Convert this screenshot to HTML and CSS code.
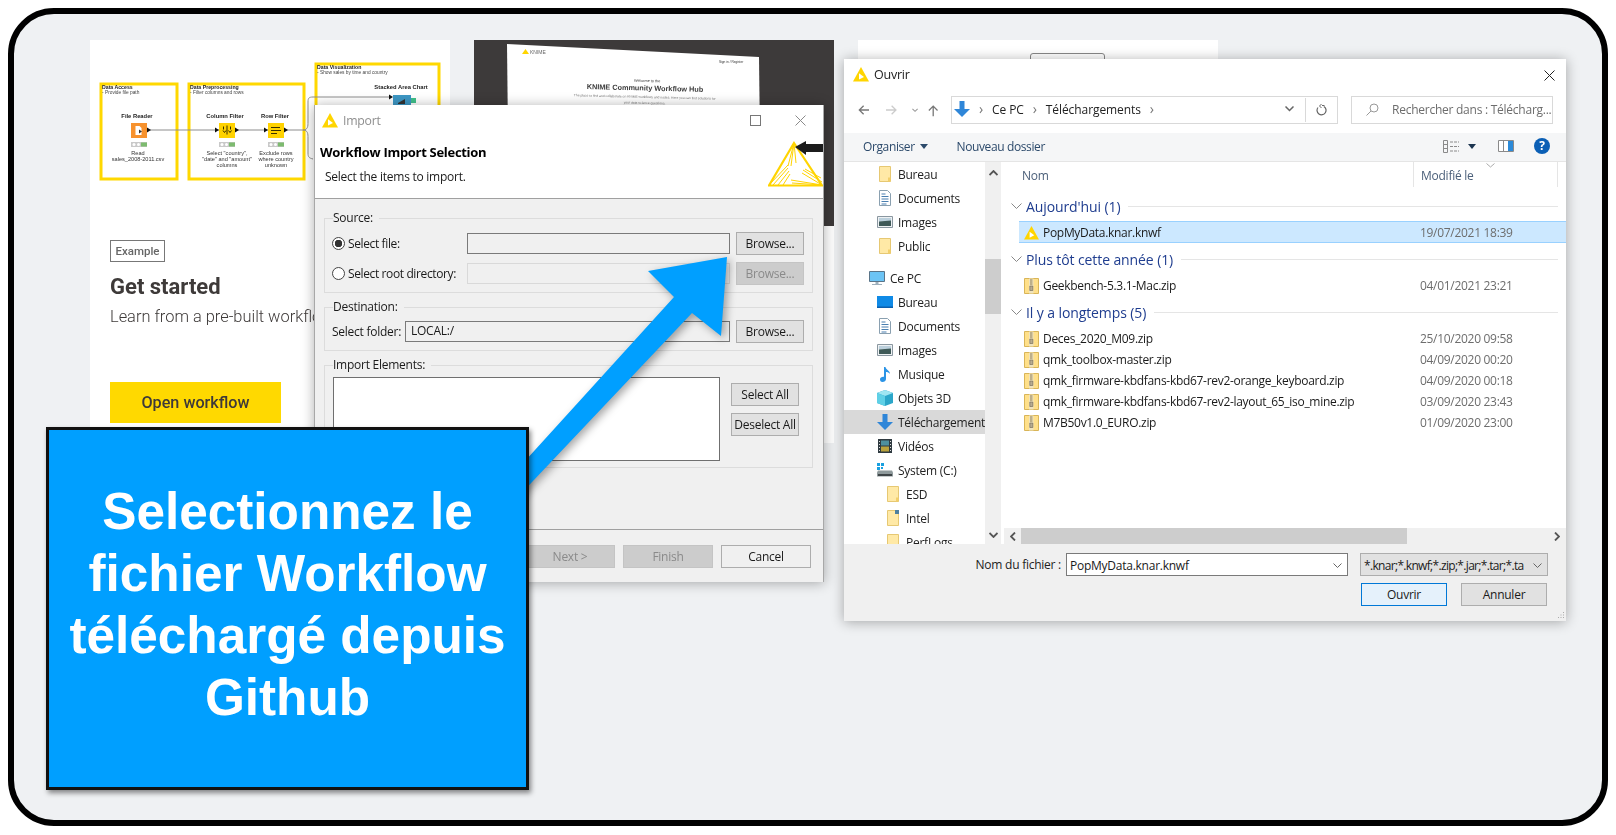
FILE: index.html
```html
<!DOCTYPE html>
<html lang="fr">
<head>
<meta charset="utf-8">
<title>Import workflow</title>
<link rel="stylesheet" href="styles.css">
</head>
<body>
<svg class="defs" aria-hidden="true">
  <symbol id="knime" viewBox="0 0 16 15"><path d="M8 0 16 14.500H0Z" fill="#ffd500"/><path d="M6 6.200 11 10 6 12.600Z" fill="#fff"/></symbol>
  <symbol id="folder" viewBox="0 0 16 16"><path d="M2.500.500h11v15h-11z" fill="#ffe9a6" stroke="#e6c873"/><path d="M11 11.500h2.500v4H11z" fill="#f2cf6b"/></symbol>
  <symbol id="folder-i" viewBox="0 0 16 16"><path d="M2.500.500h11v15h-11z" fill="#ffe9a6" stroke="#e6c873"/><path d="M10 0h4v4h-4z" fill="#4d7f9e"/></symbol>
  <symbol id="doc" viewBox="0 0 16 16"><path d="M2.500.500h8l3 3v12h-11z" fill="#fff" stroke="#8aa0b0"/><path d="M4.500 4h4M4.500 6.500h7M4.500 9h7M4.500 11.500h7M4.500 14h5" stroke="#4a7fb0"/></symbol>
  <symbol id="images" viewBox="0 0 16 16"><path d="M.5 2.500h15v11H.500z" fill="#eef1f3" stroke="#8a97a0"/><path d="M2 4h12v3.500H2z" fill="#bcd0dc"/><path d="M2 7.500 14 6.500v5.500H2z" fill="#3f5a58"/></symbol>
  <symbol id="desktop" viewBox="0 0 16 16"><path d="M0 2h16v11.500H0z" fill="#0f8ae6"/><path d="M0 12.500h16V14H0z" fill="#0a5fae"/></symbol>
  <symbol id="pc" viewBox="0 0 16 16"><path d="M.5 1.500h15v10H.500z" fill="#6cc4f5" stroke="#5a7488"/><path d="M6.500 12h3v2h-3zM3 14h10v1H3z" fill="#9fb0bc"/></symbol>
  <symbol id="music" viewBox="0 0 16 16"><path d="M7 1h1.500c.3 3 4.500 3.500 4.500 7-1-1.500-2.600-2-4-2v7c0 1.800-1.700 3-3.500 3S3 14.900 3 13.300 4.900 10.500 7 10.800Z" fill="#2b94e6"/></symbol>
  <symbol id="cube" viewBox="0 0 16 16"><path d="M8 0 16 3v10l-8 3-8-3V3Z" fill="#2ba6c9"/><path d="M8 0 16 3 8 6 0 3Z" fill="#9fe6f2"/><path d="M0 3 8 6v10l-8-3Z" fill="#5fd0e6"/></symbol>
  <symbol id="down" viewBox="0 0 16 16"><path d="M5.500 0h5v8H16l-8 8-8-8h5.500z" fill="#2f86d8"/></symbol>
  <symbol id="video" viewBox="0 0 16 16"><path d="M1 1h14v14H1z" fill="#2f3a40"/><path d="M4 2.500h8v5H4z" fill="#4d8f9e"/><path d="M4 8.500h8v5H4z" fill="#b9a23c"/><path d="M2 3h1v1H2zM2 6h1v1H2zM2 9h1v1H2zM2 12h1v1H2zM13 3h1v1h-1zM13 6h1v1h-1zM13 9h1v1h-1zM13 12h1v1h-1z" fill="#ddd"/></symbol>
  <symbol id="drive" viewBox="0 0 16 16"><path d="M1 8.500h14l1 2v4H0v-4z" fill="#8f9a9c"/><path d="M1 12h14v2H1z" fill="#3f4548"/><path d="M0 1h3v3H0zM4 1h3v3H4zM0 5h3v3H0zM4 5h2v2H4z" fill="#19a0e0"/></symbol>
  <symbol id="zip" viewBox="0 0 15 16"><path d="M.5.500h14v15H.500z" fill="#ffe08a" stroke="#d9b558"/><path d="M5 .500h4.500v15H5z" fill="#efe3bd"/><path d="M6 2h2.500M6 4h2.500M6 6h2.500" stroke="#8a7b58"/><path d="M5.800 8h3v4.500h-3z" fill="#b7ab90" stroke="#6d6350" stroke-width=".6"/></symbol>
</svg>

<main class="frame">

  <section class="card card-one">
    <svg class="diagram" viewBox="90 40 360 200" width="360" height="200" role="img" aria-label="Workflow">
      <g class="yellow-box">
        <rect x="101" y="84" width="76" height="95"/>
        <rect x="189" y="84" width="115" height="95"/>
        <rect x="316" y="64" width="123" height="80"/>
      </g>
      <path class="wire" d="M150 130H303c5 0 5-4 5-8V102c0-4 1-5 5-5H392M303 130c5 0 5 4 5 8v15c0 4 1 5 5 6"/>
      <g class="dia-head">
        <text x="102" y="88.500">Data Access</text>
        <text x="190" y="88.500">Data Preprocessing</text>
        <text x="317" y="69">Data Visualization</text>
      </g>
      <g class="dia-sub">
        <text x="102" y="93.500">- Provide file path</text>
        <text x="190" y="93.500">- Filter columns and rows</text>
        <text x="317" y="74">- Show sales by time and country</text>
      </g>
      <g class="dia-label">
        <text x="137" y="118">File Reader</text>
        <text x="225" y="118">Column Filter</text>
        <text x="275" y="118">Row Filter</text>
        <text x="401" y="89">Stacked Area Chart</text>
      </g>
      <rect x="131" y="123" width="16" height="15" fill="#f7922e"/>
      <path d="M135.500 126h4l2 2v7h-6z" fill="#fff"/><path d="M139 129.500v4l3-2z" fill="#333"/>
      <rect x="219" y="123" width="16" height="15" fill="#ffd200"/>
      <path d="M223.500 126.500v3M227 125.500v9M230.500 126.500v3M223 130.500l1.500 2 1.500-2M228.500 130.500l1.500 2 1.500-2" stroke="#3a3000" fill="none"/>
      <rect x="268" y="123" width="16" height="15" fill="#ffd200"/>
      <path d="M271 127.500h9M271 130.500h10M271 133.500h6" stroke="#3a3000"/>
      <rect x="393" y="95" width="18" height="12" fill="#3d97c4"/>
      <path d="M398 103l7-4v5h-7z" fill="#333"/>
      <rect x="411" y="98" width="5" height="5" fill="#3fc08a"/>
      <g fill="#111">
        <path d="M147 127.500v5l4-2.500z"/><path d="M215 127.500v5l4-2.500z"/><path d="M235 127.500v5l4-2.500z"/>
        <path d="M264 127.500v5l4-2.500z"/><path d="M284 127.500v5l4-2.500z"/><path d="M389 94.500v5l4-2.500z"/>
      </g>
      <g class="lights">
        <rect x="131" y="142" width="16" height="5"/><rect x="219" y="142" width="16" height="5"/><rect x="268" y="142" width="16" height="5"/>
      </g>
      <g fill="#fff"><circle cx="134" cy="144.500" r="1.500"/><circle cx="138.500" cy="144.500" r="1.500"/><circle cx="222" cy="144.500" r="1.500"/><circle cx="226.500" cy="144.500" r="1.500"/><circle cx="271" cy="144.500" r="1.500"/><circle cx="275.500" cy="144.500" r="1.500"/></g>
      <g fill="#7dbb6f"><rect x="141" y="142.500" width="6" height="4"/><rect x="229" y="142.500" width="6" height="4"/><rect x="278" y="142.500" width="6" height="4"/></g>
      <g class="dia-note">
        <text x="138" y="155">Read</text>
        <text x="138" y="161">sales_2008-2011.csv</text>
        <text x="227" y="155">Select "country",</text>
        <text x="227" y="161">"date" and "amount"</text>
        <text x="227" y="167">columns</text>
        <text x="276" y="155">Exclude rows</text>
        <text x="276" y="161">where country</text>
        <text x="276" y="167">unknown</text>
      </g>
    </svg>
    <div class="card-body">
      <span class="tag">Example</span>
      <h2 class="card-title">Get started</h2>
      <p class="card-text">Learn from a pre-built workflow</p>
      <a class="cta">Open workflow</a>
    </div>
  </section>

  <section class="card card-two">
    <div class="hub">
      <svg viewBox="474 40 360 186" width="360" height="186" role="img" aria-label="KNIME Hub">
        <path d="M507 44 759 57 761 226H509Z" fill="#fff"/>
        <path d="M522 54 525.500 49 529 54Z" fill="#ffd500"/>
        <text x="530" y="54" class="hub-logo">KNIME</text>
        <text x="719" y="63" class="hub-nav">Sign in / Register</text>
        <g transform="rotate(1.400 645 88)">
          <text x="647" y="82" class="hub-small">Welcome to the</text>
          <text x="645" y="90.500" class="hub-title">KNIME Community Workflow Hub</text>
          <text x="645" y="98" class="hub-tiny">The place to find and collaborate on KNIME workflows and nodes. Here you can find solutions for</text>
          <text x="645" y="104" class="hub-tiny">your data science questions.</text>
        </g>
      </svg>
    </div>
  </section>

  <section class="card card-three"><div class="ghost-box"></div></section>

  <section class="window import">
    <header class="import-head">
      <div class="titlebar">
        <svg class="title-icon" width="16" height="15"><use href="#knime"/></svg>
        <span class="title-muted">Import</span>
        <span class="max-btn"></span>
        <svg class="close-btn" width="11" height="11" viewBox="0 0 11 11"><path d="M.5.500l10 10M10.500.500l-10 10" stroke="#8a8a8a"/></svg>
      </div>
      <h1 class="import-title">Workflow Import Selection</h1>
      <p class="import-sub">Select the items to import.</p>
      <svg class="import-logo" viewBox="0 0 55 47" width="55" height="47">
        <g fill="none" stroke="#ffd400">
          <path d="M26 3 54 45.500H1Z" stroke-width="2.200"/>
          <path d="M26 3 20 26M26 3 23 26M26 3 28 23M1 45 20 25M5 45 20 28M10 45 21 31M15 45 22 34M54 45 34 33M54 42 35 30M53 38 37 29M54 45 23 40M54 45 24 43" stroke-width="1"/>
        </g>
        <path d="M27 7 38 1V4H55V12H38v3Z" fill="#1c1c1c"/>
      </svg>
    </header>
    <div class="import-body">
      <div class="group">
        <span class="legend">Source:</span>
        <div class="form-grid source-grid">
          <label class="radio-line"><span class="radio on"></span>Select file:</label>
          <span class="field"></span>
          <button class="btn">Browse...</button>
          <label class="radio-line"><span class="radio"></span>Select root directory:</label>
          <span class="field field-off"></span>
          <button class="btn btn-off">Browse...</button>
        </div>
      </div>
      <div class="group group-dest">
        <span class="legend">Destination:</span>
        <div class="form-grid dest-grid">
          <label class="folder-label">Select folder:</label>
          <span class="field">LOCAL:/</span>
          <button class="btn">Browse...</button>
        </div>
      </div>
      <div class="group">
        <span class="legend">Import Elements:</span>
        <div class="elements">
          <div class="listbox"></div>
          <div class="side-btns">
            <button class="btn">Select All</button>
            <button class="btn">Deselect All</button>
          </div>
        </div>
      </div>
    </div>
    <footer class="import-foot">
      <button class="btn btn-wide btn-off">Next &gt;</button>
      <button class="btn btn-wide btn-off">Finish</button>
      <button class="btn btn-wide btn-cancel">Cancel</button>
    </footer>
  </section>

  <svg class="arrow-layer" viewBox="14 14 1588 806" width="1588" height="806" aria-hidden="true">
    <path d="M727 257 648 271 674 297 515 472V500L692 313 721 336Z" fill="#009fff"/>
  </svg>

  <section class="window ouvrir">
    <div class="o-title">
      <svg class="o-icon" width="16" height="15"><use href="#knime"/></svg>
      <span>Ouvrir</span>
      <svg class="o-close" width="11" height="11" viewBox="0 0 11 11"><path d="M.5.500l10 10M10.500.500l-10 10" stroke="#222"/></svg>
    </div>
    <div class="o-address">
      <div class="nav-btns">
        <svg width="13" height="12" viewBox="0 0 13 12"><path d="M13 6H1.500M6.500 1 1.500 6l5 5" fill="none" stroke="#777" stroke-width="1.500"/></svg>
        <svg width="13" height="12" viewBox="0 0 13 12"><path d="M0 6h11.500M6.500 1l5 5-5 5" fill="none" stroke="#ccc" stroke-width="1.500"/></svg>
        <svg width="7" height="5" viewBox="0 0 7 5"><path d="M.5.500 3.500 3.500 6.500.500" fill="none" stroke="#999" stroke-width="1.200"/></svg>
        <svg width="12" height="13" viewBox="0 0 12 13"><path d="M6 13V1.500M1 6.500l5-5 5 5" fill="none" stroke="#777" stroke-width="1.500"/></svg>
      </div>
      <div class="crumbs">
        <svg class="crumb-icon" width="16" height="16"><use href="#down"/></svg>
        <span class="sep">›</span><span>Ce PC</span>
        <span class="sep">›</span><span>Téléchargements</span>
        <span class="sep">›</span>
        <svg class="crumb-drop" width="9" height="6" viewBox="0 0 9 6"><path d="M.5.500 4.500 4.500 8.500.500" fill="none" stroke="#666" stroke-width="1.500"/></svg>
        <span class="refresh">
          <svg width="11" height="12" viewBox="0 0 11 12"><path d="M5 1.500h2.500M4.500 0l-2 2 2 2" fill="none" stroke="#666" transform="translate(1 0)"/><path d="M7.800 2.400A4.500 4.500 0 1 1 2 3.500" fill="none" stroke="#666" stroke-width="1.200"/></svg>
        </span>
      </div>
      <div class="search">
        <svg width="13" height="13" viewBox="0 0 13 13"><circle cx="8" cy="5" r="4" fill="none" stroke="#999"/><path d="M5 8 .5 12.500" stroke="#999"/></svg>
        <span>Rechercher dans : Télécharg...</span>
      </div>
    </div>
    <div class="o-toolbar">
      <span class="tool">Organiser <i class="caret"></i></span>
      <span class="tool tool-new">Nouveau dossier</span>
      <span class="tool-right">
        <svg width="16" height="13" viewBox="0 0 16 13"><path d="M.5.500h4v12h-4zM.5 4.500h4M.5 8.500h4" fill="none" stroke="#8a8a8a"/><path d="M7 2h9M7 6.500h9M7 11h9" stroke="#8a8a8a" stroke-dasharray="3 1"/></svg>
        <i class="caret caret-view"></i>
        <svg class="pane-icon" width="16" height="12" viewBox="0 0 16 12"><path d="M.5.500h15v11H.500z" fill="#fff" stroke="#8a8a8a"/><path d="M10 1h5v10h-5z" fill="#2c8ad8"/><path d="M5.500 1v10" stroke="#8a8a8a"/></svg>
        <span class="help">?</span>
      </span>
    </div>
    <div class="o-main">
      <nav class="sidebar">
        <div class="nav-item lv1"><svg width="16" height="16"><use href="#folder"/></svg>Bureau</div>
        <div class="nav-item lv1"><svg width="16" height="16"><use href="#doc"/></svg>Documents</div>
        <div class="nav-item lv1"><svg width="16" height="16"><use href="#images"/></svg>Images</div>
        <div class="nav-item lv1"><svg width="16" height="16"><use href="#folder"/></svg>Public</div>
        <div class="nav-item lv0 nav-gap"><svg width="16" height="16"><use href="#pc"/></svg>Ce PC</div>
        <div class="nav-item lv1"><svg width="16" height="16"><use href="#desktop"/></svg>Bureau</div>
        <div class="nav-item lv1"><svg width="16" height="16"><use href="#doc"/></svg>Documents</div>
        <div class="nav-item lv1"><svg width="16" height="16"><use href="#images"/></svg>Images</div>
        <div class="nav-item lv1"><svg width="16" height="16"><use href="#music"/></svg>Musique</div>
        <div class="nav-item lv1"><svg width="16" height="16"><use href="#cube"/></svg>Objets 3D</div>
        <div class="nav-item lv1 nav-on"><svg width="16" height="16"><use href="#down"/></svg>Téléchargements</div>
        <div class="nav-item lv1"><svg width="16" height="16"><use href="#video"/></svg>Vidéos</div>
        <div class="nav-item lv1"><svg width="16" height="16"><use href="#drive"/></svg>System (C:)</div>
        <div class="nav-item lv2"><svg width="16" height="16"><use href="#folder"/></svg>ESD</div>
        <div class="nav-item lv2"><svg width="16" height="16"><use href="#folder-i"/></svg>Intel</div>
        <div class="nav-item lv2"><svg width="16" height="16"><use href="#folder"/></svg>PerfLogs</div>
      </nav>
      <div class="vscroll">
        <svg width="9" height="6" viewBox="0 0 9 6"><path d="M.5 5 4.500 1l4 4" fill="none" stroke="#555" stroke-width="1.800"/></svg>
        <div class="vthumb"></div>
        <svg width="9" height="6" viewBox="0 0 9 6"><path d="M.5 1l4 4 4-4" fill="none" stroke="#555" stroke-width="1.800"/></svg>
      </div>
      <div class="files">
        <div class="columns">
          <span class="col col-name">Nom</span>
          <span class="col col-date">Modifié le
            <svg class="sort" width="9" height="5" viewBox="0 0 9 5"><path d="M.5.500 4.500 4l4-3.500" fill="none" stroke="#aaa"/></svg>
          </span>
          <span class="col"></span>
        </div>
        <div class="list">
          <div class="gh"><svg width="11" height="6" viewBox="0 0 11 6"><path d="M.5.500l5 5 5-5" fill="none" stroke="#888"/></svg><b>Aujourd'hui (1)</b><i></i></div>
          <div class="row row-on"><svg width="15" height="14"><use href="#knime"/></svg><span>PopMyData.knar.knwf</span><time>19/07/2021 18:39</time></div>
          <div class="gh"><svg width="11" height="6" viewBox="0 0 11 6"><path d="M.5.500l5 5 5-5" fill="none" stroke="#888"/></svg><b>Plus tôt cette année (1)</b><i></i></div>
          <div class="row"><svg width="15" height="16"><use href="#zip"/></svg><span>Geekbench-5.3.1-Mac.zip</span><time>04/01/2021 23:21</time></div>
          <div class="gh"><svg width="11" height="6" viewBox="0 0 11 6"><path d="M.5.500l5 5 5-5" fill="none" stroke="#888"/></svg><b>Il y a longtemps (5)</b><i></i></div>
          <div class="row"><svg width="15" height="16"><use href="#zip"/></svg><span>Deces_2020_M09.zip</span><time>25/10/2020 09:58</time></div>
          <div class="row"><svg width="15" height="16"><use href="#zip"/></svg><span>qmk_toolbox-master.zip</span><time>04/09/2020 00:20</time></div>
          <div class="row"><svg width="15" height="16"><use href="#zip"/></svg><span>qmk_firmware-kbdfans-kbd67-rev2-orange_keyboard.zip</span><time>04/09/2020 00:18</time></div>
          <div class="row"><svg width="15" height="16"><use href="#zip"/></svg><span>qmk_firmware-kbdfans-kbd67-rev2-layout_65_iso_mine.zip</span><time>03/09/2020 23:43</time></div>
          <div class="row"><svg width="15" height="16"><use href="#zip"/></svg><span>M7B50v1.0_EURO.zip</span><time>01/09/2020 23:00</time></div>
        </div>
        <div class="hscroll">
          <svg width="6" height="9" viewBox="0 0 6 9"><path d="M5 .500l-4 4 4 4" fill="none" stroke="#555" stroke-width="1.800"/></svg>
          <div class="hthumb"></div>
          <svg width="6" height="9" viewBox="0 0 6 9"><path d="M1 .500l4 4-4 4" fill="none" stroke="#555" stroke-width="1.800"/></svg>
        </div>
      </div>
    </div>
    <div class="o-bottom">
      <div class="o-line">
        <label class="name-label">Nom du fichier :</label>
        <div class="combo">PopMyData.knar.knwf
          <svg width="9" height="5" viewBox="0 0 9 5"><path d="M.5.500l4 4 4-4" fill="none" stroke="#666"/></svg>
        </div>
        <div class="filter"><span>*.knar;*.knwf;*.zip;*.jar;*.tar;*.ta</span>
          <svg width="9" height="5" viewBox="0 0 9 5"><path d="M.5.500l4 4 4-4" fill="none" stroke="#666"/></svg>
        </div>
      </div>
      <div class="o-line o-actions">
        <button class="btn btn-o btn-primary">Ouvrir</button>
        <button class="btn btn-o">Annuler</button>
      </div>
      <svg class="grip" width="9" height="9" viewBox="0 0 9 9"><path d="M7 1h1v1H7zM4.500 3.500h1v1h-1zM7 3.500h1v1H7zM2 6h1v1H2zM4.500 6h1v1h-1zM7 6h1v1H7z" fill="#aaa"/></svg>
    </div>
  </section>

  <aside class="callout">Selectionnez le<br>fichier Workflow<br>téléchargé depuis<br>Github</aside>
</main>
</body>
</html>
```
FILE: styles.css
```css
* { box-sizing: border-box; }
html, body { margin: 0; padding: 0; background: #fff; }
body { width: 1616px; height: 835px; overflow: hidden; font-family: "Open Sans", "Noto Sans", sans-serif; }
.defs { display: none; }
button { font: inherit; margin: 0; padding: 0; }
h1, h2, p { margin: 0; }

.frame {
  position: relative;
  width: 1600px;
  height: 818px;
  margin: 8px;
  border: 6px solid #000;
  border-radius: 46px;
  background: #eff1f3;
  overflow: hidden;
}

/* background cards on the slide canvas */
.card { position: absolute; top: 26px; width: 360px; height: 403px; background: #fff; }
.card-one { left: 76px; font-family: Roboto, sans-serif; }
.card-two { left: 460px; }
.card-three { left: 844px; }
.diagram { display: block; filter: blur(.25px); }
.yellow-box rect { fill: none; stroke: #ffd800; stroke-width: 3; }
.wire { fill: none; stroke: #8d8d8d; stroke-width: 1; }
.diagram text { font-family: "Liberation Sans", sans-serif; fill: #222; }
.dia-head text { font-size: 5.200px; font-weight: 700; }
.dia-sub text { font-size: 4.800px; fill: #444; }
.dia-label text { font-size: 5.800px; font-weight: 700; text-anchor: middle; }
.dia-note text { font-size: 5.600px; text-anchor: middle; fill: #333; }
.lights rect { fill: #c9c9c9; }
.card-body { display: flex; flex-direction: column; align-items: flex-start; padding-left: 20px; filter: blur(.25px); }
.tag { height: 22px; width: 55px; border: 1px solid #777; color: #666; font-size: 11.500px; font-weight: 500; line-height: 21px; text-align: center; }
.card-title { margin-top: 12px; font-size: 22px; line-height: 26px; font-weight: 700; color: #3e3a39; }
.card-text { margin-top: 7px; font-size: 16.400px; line-height: 20px; font-weight: 300; color: #3e3a39; white-space: nowrap; }
.cta { margin-top: 55px; width: 171px; height: 41px; background: #ffd900; color: #3e3a39; font-size: 16.200px; font-weight: 500; line-height: 41px; text-align: center; }

.hub { background: #3d3a3a; height: 186px; }
.hub svg { display: block; filter: blur(.25px); }
.hub text { font-family: "Liberation Sans", sans-serif; fill: #333; text-anchor: middle; }
.hub text.hub-logo { font-size: 5px; text-anchor: start; fill: #666; }
.hub text.hub-nav { font-size: 3.200px; text-anchor: start; }
.hub-small { font-size: 3.800px; }
.hub text.hub-title { font-size: 7.300px; font-weight: 700; fill: #3b3b3b; }
.hub text.hub-tiny { font-size: 3.300px; fill: #777; }
.ghost-box { width: 75px; height: 30px; margin: 13px 0 0 172px; border: 1px solid #888; border-radius: 3px; }

/* dialog windows */
.window { position: absolute; display: flex; flex-direction: column; background: #f0f0f0; box-shadow: 0 1px 12px rgba(0,0,0,.32); font-size: 12px; color: #1a1a1a; letter-spacing: -.25px; filter: blur(.2px); }

.import { left: 300px; top: 91px; width: 510px; height: 477px; border-left: 1px solid #a8a8a8; border-right: 1px solid #a8a8a8; }
.import-head { position: relative; height: 94px; background: #fff; border-bottom: 1px solid #a0a0a0; flex: none; }
.titlebar { display: flex; align-items: center; height: 32px; padding: 0 0 2px 7px; }
.title-muted { margin-left: 5px; font-size: 12.300px; color: #8f8f8f; }
.max-btn { width: 11px; height: 11px; margin-left: auto; margin-right: 1px; border: 1px solid #777; }
.close-btn { margin: 0 17px 0 33px; }
.import-title { padding-left: 5px; font-size: 13px; line-height: 30px; margin-bottom: 2px; font-weight: 700; color: #000; letter-spacing: -.3px; }
.import-sub { padding-left: 10px; line-height: 16px; }
.import-logo { position: absolute; right: 0; top: 35px; }
.import-body { flex: 1; display: flex; flex-direction: column; gap: 14px; padding: 19px 10px 0 9px; }
.group { border: 1px solid #dcdcdc; padding: 0 8px 6px 7px; }
.group-dest { padding-bottom: 7px; }
.legend { display: block; width: fit-content; height: 16px; margin: -8px 0 0 1px; padding: 0 6px 0 0; background: #f0f0f0; line-height: 14px; }
.form-grid { display: grid; align-items: center; }
.source-grid { grid-template-columns: 135px 263px 68px; grid-template-rows: 23px 23px; row-gap: 7px; padding-top: 5px; margin-bottom: 1px; }
.dest-grid { grid-template-columns: 73px 325px 68px; padding-top: 4px; }
.form-grid .btn { width: 68px; margin-left: 6px; }
.radio-line { display: flex; align-items: center; gap: 3px; white-space: nowrap; letter-spacing: -.38px; }
.radio { width: 13px; height: 13px; border: 1px solid #444; border-radius: 50%; background: #fff; }
.radio.on { background: radial-gradient(circle, #333 0 3.500px, #fff 4px); }
.field { display: block; height: 21px; padding-left: 5px; border: 1px solid #7a7a7a; background: #f0f0f0; line-height: 18px; }
.field-off { border-color: #d9d9d9; }
.btn { height: 23px; border: 1px solid #adadad; background: #e1e1e1; color: #1a1a1a; letter-spacing: -.25px; }
.btn-off { background: #ccc; border-color: #c4c4c4; color: #8a8a8a; }
.elements { display: flex; padding: 3px 0 0 1px; gap: 11px; }
.listbox { width: 387px; height: 84px; background: #fff; border: 1px solid #6f6f6f; }
.side-btns { display: flex; flex-direction: column; gap: 7px; padding-top: 6px; }
.side-btns .btn { width: 68px; }
.import-foot { flex: none; height: 53px; display: flex; justify-content: flex-end; gap: 8px; padding: 15px 12px 0 0; border-top: 1px solid #a0a0a0; }
.btn-wide { width: 90px; }
.btn-cancel { background: #f0f0f0; }

.arrow-layer { position: absolute; left: 0; top: 0; pointer-events: none; filter: drop-shadow(3px 3px 4px rgba(0,0,0,.35)); }

.ouvrir { left: 830px; top: 45px; width: 722px; height: 562px; background: #fff; }
.o-title { flex: none; display: flex; align-items: center; height: 32px; padding: 0 0 2px 9px; margin-bottom: 5px; font-size: 12.500px; }
.o-title span { margin-left: 5px; color: #222; }
.o-close { margin-left: auto; margin-right: 11px; margin-top: 2px; }
.o-address { flex: none; display: flex; height: 28px; gap: 13px; margin-bottom: 9px; padding-right: 13px; }
.nav-btns { width: 94px; display: flex; align-items: center; padding-left: 14px; gap: 17px; }
.nav-btns svg:nth-child(3) { margin-left: -3px; margin-right: -7px; }
.crumbs { width: 387px; display: flex; align-items: center; border: 1px solid #d9d9d9; padding: 0 0 2px 2px; color: #222; letter-spacing: -.08px; }
.sep { width: 22px; text-align: center; color: #777; font-size: 14px; line-height: 14px; }
.crumb-drop { margin-left: auto; margin-right: 11px; }
.refresh { display: flex; align-items: center; justify-content: center; width: 32px; height: 100%; margin-bottom: -2px; border-left: 1px solid #d9d9d9; }
.search { width: 202px; display: flex; align-items: center; gap: 13px; padding: 0 0 2px 14px; border: 1px solid #d9d9d9; color: #6d6d6d; white-space: nowrap; }
.o-toolbar { flex: none; display: flex; align-items: center; height: 29px; padding: 0 0 2px 19px; background: #f5f6f7; border-bottom: 1px solid #e5e5e5; color: #2c4a6b; letter-spacing: -.38px; }
.tool-new { margin-left: 29px; }
.caret { display: inline-block; width: 0; height: 0; margin-left: 2px; vertical-align: 2px; border: 4px solid transparent; border-top: 5px solid #2c4a6b; border-bottom: 0; }
.tool-right { display: flex; align-items: center; margin-left: auto; padding-right: 16px; }
.caret-view { margin-left: 9px; vertical-align: 0; border-top-color: #1c3550; }
.pane-icon { margin-left: 22px; }
.help { margin-left: 20px; width: 16px; height: 16px; border-radius: 50%; background: #0b5fb5; color: #fff; font-size: 12px; font-weight: 700; line-height: 16px; text-align: center; letter-spacing: 0; }

.o-main { flex: 1; display: flex; min-height: 0; }
.sidebar { width: 141px; flex: none; overflow: hidden; }
.nav-item { display: flex; align-items: center; height: 24px; color: #222; white-space: nowrap; overflow: hidden; }
.nav-item svg { flex: none; width: 24px; padding: 0 4px; margin-right: 1px; }
.lv0 { padding-left: 21px; }
.lv1 { padding-left: 29px; }
.lv2 { padding-left: 37px; }
.nav-gap { margin-top: 8px; }
.nav-on { background: #d9d9d9; }
.vscroll { position: relative; width: 16px; flex: none; display: flex; flex-direction: column; align-items: center; justify-content: space-between; padding: 8px 0 6px; background: #f0f0f0; }
.vthumb { position: absolute; left: 0; top: 97px; width: 16px; height: 55px; background: #cdcdcd; }
.files { flex: 1; min-width: 0; margin-left: 3px; display: flex; flex-direction: column; }
.columns { flex: none; display: grid; grid-template-columns: 410px 144px 1fr; height: 25px; color: #4c607a; }
.col { display: flex; align-items: center; position: relative; border-right: 1px solid #e5e5e5; padding: 2px 0 0 7px; }
.col:last-child { border: 0; }
.col-name { padding-left: 18px; }
.sort { position: absolute; left: 72px; top: 1px; }
.list { flex: 1; padding: 8px 0 0 0; min-height: 0; }
.gh { display: flex; align-items: center; height: 22px; margin: 0 8px 5px 7px; }
.gh:first-child { margin-bottom: 4px; }
.gh b { margin-left: 4px; font-weight: 400; font-size: 14px; letter-spacing: -.1px; color: #1f3d8f; white-space: nowrap; }
.gh i { flex: 1; margin-left: 8px; border-top: 1px solid #e5e5e5; }
.row { display: grid; grid-template-columns: 19px 377px 1fr; align-items: center; height: 21px; margin-left: 15px; padding-left: 5px; color: #1a1a1a; white-space: nowrap; letter-spacing: -.3px; }
.row time { color: #6d6d6d; }
.row-on { height: 22px; margin-bottom: 5px; padding-top: 1px; background: #cce8ff; border: solid #99d1ff; border-width: 1px 0; }
.row + .gh { margin-top: 5px; }
.row-on + .gh { margin-top: 0; }
.hscroll { flex: none; height: 16px; display: flex; align-items: center; background: #f0f0f0; padding: 0 6px; }
.hthumb { width: 386px; height: 16px; margin-left: 5px; margin-right: auto; background: #cdcdcd; }

.o-bottom { position: relative; flex: none; height: 77px; background: #f0f0f0; padding-top: 9px; }
.o-line { display: flex; align-items: center; justify-content: flex-end; padding-right: 18px; }
.name-label { margin-right: 5px; color: #222; }
.combo, .filter { display: flex; align-items: center; justify-content: space-between; height: 23px; padding: 1px 5px 0 3px; white-space: nowrap; }
.combo { width: 282px; margin-right: 12px; background: #fff; border: 1px solid #7a7a7a; }
.filter { width: 188px; background: #e1e1e1; border: 1px solid #adadad; letter-spacing: -.68px; }
.o-actions { gap: 14px; padding-right: 19px; margin-top: 7px; }
.btn-o { width: 86px; }
.btn-primary { background: #e5f1fb; border-color: #0078d7; }
.grip { position: absolute; right: 1px; bottom: 1px; }

.callout {
  position: absolute;
  left: 32px;
  top: 413px;
  width: 483px;
  height: 363px;
  display: flex;
  align-items: center;
  justify-content: center;
  padding-bottom: 8px;
  border: 3px solid #111;
  background: #009fff;
  color: #fff;
  font-family: "Liberation Sans", Arial, sans-serif;
  font-size: 51.300px;
  font-weight: 700;
  line-height: 62px;
  text-align: center;
  box-shadow: 2px 3px 5px rgba(0,0,0,.45);
}
```
